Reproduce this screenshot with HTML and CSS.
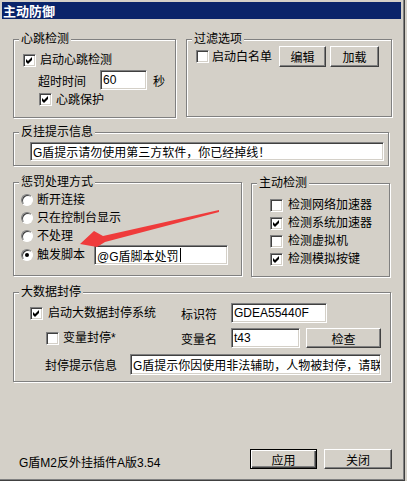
FILE: index.html
```html
<!DOCTYPE html>
<html lang="zh-CN">
<head>
    <meta charset="UTF-8">
    <title>主动防御</title>
    <link rel="stylesheet" href="styles.css">
</head>
<body>
    <div class="window">
        <!-- Title bar -->
        <div class="titlebar">主动防御</div>

        <div class="content">
            <!-- Row 1: heartbeat + filter -->
            <div class="row-top">
                <div class="group group-heart">
                    <span class="legend">心跳检测</span>
                    <div class="line heart-on">
                        <span class="check"><svg viewBox="0 0 13 13" width="13" height="13"><polygon points="3,5 5,7 9,3 9,6 5,10 3,8"/></svg></span>
                        <span class="text">启动心跳检测</span>
                    </div>
                    <div class="line heart-timeout">
                        <span class="timeout-label">超时时间</span>
                        <div class="edit edit-timeout">60</div>
                        <span class="unit">秒</span>
                    </div>
                    <div class="line heart-protect">
                        <span class="check"><svg viewBox="0 0 13 13" width="13" height="13"><polygon points="3,5 5,7 9,3 9,6 5,10 3,8"/></svg></span>
                        <span class="text">心跳保护</span>
                    </div>
                </div>

                <div class="group group-filter">
                    <span class="legend">过滤选项</span>
                    <div class="line filter-line">
                        <span class="check"></span>
                        <span class="text text-white">启动白名单</span>
                        <button class="btn btn-edit">编辑</button>
                        <button class="btn btn-load">加载</button>
                    </div>
                </div>
            </div>

            <!-- Row 2: message -->
            <div class="group group-msg">
                <span class="legend">反挂提示信息</span>
                <div class="edit edit-msg">G盾提示请勿使用第三方软件，你已经掉线！</div>
            </div>

            <!-- Row 3: punishment + detection -->
            <div class="row-mid">
                <div class="group group-punish">
                    <span class="legend">惩罚处理方式</span>
                    <div class="radios">
                        <div class="line radio-line"><span class="radio"></span><span class="text">断开连接</span></div>
                        <div class="line radio-line"><span class="radio"></span><span class="text">只在控制台显示</span></div>
                        <div class="line radio-line"><span class="radio"></span><span class="text">不处理</span></div>
                        <div class="line radio-line radio-last">
                            <span class="radio on"><span class="dot"></span></span>
                            <span class="text script-label">触发脚本</span>
                            <div class="edit edit-script">@G盾脚本处罚<span class="caret"></span></div>
                        </div>
                    </div>
                </div>

                <div class="group group-detect">
                    <span class="legend">主动检测</span>
                    <div class="detects">
                        <div class="line detect-line"><span class="check"></span><span class="text">检测网络加速器</span></div>
                        <div class="line detect-line"><span class="check"><svg viewBox="0 0 13 13" width="13" height="13"><polygon points="3,5 5,7 9,3 9,6 5,10 3,8"/></svg></span><span class="text">检测系统加速器</span></div>
                        <div class="line detect-line"><span class="check"></span><span class="text">检测虚拟机</span></div>
                        <div class="line detect-line"><span class="check"><svg viewBox="0 0 13 13" width="13" height="13"><polygon points="3,5 5,7 9,3 9,6 5,10 3,8"/></svg></span><span class="text">检测模拟按键</span></div>
                    </div>
                </div>
            </div>

            <!-- Row 4: big data ban -->
            <div class="group group-ban">
                <span class="legend">大数据封停</span>
                <div class="line ban-a">
                    <div class="cell cell-check">
                        <span class="check"><svg viewBox="0 0 13 13" width="13" height="13"><polygon points="3,5 5,7 9,3 9,6 5,10 3,8"/></svg></span>
                        <span class="text">启动大数据封停系统</span>
                    </div>
                    <span class="cell cell-label">标识符</span>
                    <div class="edit edit-id">GDEA55440F</div>
                </div>
                <div class="line ban-b">
                    <div class="cell cell-check cell-var">
                        <span class="check"></span>
                        <span class="text">变量封停*</span>
                    </div>
                    <span class="cell cell-label">变量名</span>
                    <div class="edit edit-var">t43</div>
                    <button class="btn btn-check">检查</button>
                </div>
                <div class="line ban-c">
                    <span class="cell cell-tip">封停提示信息</span>
                    <div class="edit edit-tip">G盾提示你因使用非法辅助，人物被封停，请联系管理员</div>
                </div>
            </div>

            <!-- Footer -->
            <div class="footer">
                <span class="version">G盾M2反外挂插件A版3.54</span>
                <button class="btn btn-apply">应用</button>
                <button class="btn btn-close">关闭</button>
            </div>
        </div>

        <!-- Red annotation arrow -->
        <svg class="arrow" width="405" height="481" viewBox="0 0 405 481">
            <polygon points="219,210 103,236 94,231 80,244 97,247 105,242 219,212"/>
        </svg>
    </div>
</body>
</html>
```

FILE: styles.css
```css
/* General styles */
body {
    margin: 0;
    background: #d4d0c8;
    font-family: "Liberation Sans", "Noto Sans CJK SC", sans-serif;
    font-size: 12px;
    color: #000;
}

.window {
    position: relative;
    width: 405px;
    height: 481px;
    box-sizing: border-box;
    background: #d4d0c8;
    border-right: 1px solid #404040;
    border-bottom: 1px solid #404040;
    box-shadow: inset -1px -1px 0 #808080;
    overflow: hidden;
}

.titlebar {
    margin: 2px 3px 0 2px;
    height: 17px;
    line-height: 17px;
    padding-left: 1px;
    background: #0a246a;
    color: #fff;
    font-family: "Noto Sans CJK SC", sans-serif;
    font-size: 13px;
    font-weight: bold;
}

.content {
    padding-left: 13px;
}

/* Group boxes */
.group {
    box-sizing: border-box;
    border: 1px solid #808080;
    box-shadow: inset 1px 1px 0 #fff, 1px 1px 0 #fff;
}

.legend {
    display: block;
    width: max-content;
    height: 14px;
    line-height: 14px;
    margin: -8px 0 0 5px;
    padding: 0 2px;
    background: #d4d0c8;
}

.line {
    display: flex;
    align-items: center;
}

.text {
    white-space: nowrap;
    line-height: 14px;
}

/* Controls */
.check {
    flex: none;
    width: 13px;
    height: 13px;
    box-sizing: border-box;
    background: #fff;
    border: 1px solid;
    border-color: #808080 #fff #fff #808080;
    box-shadow: inset 1px 1px 0 #404040, inset -1px -1px 0 #d4d0c8;
    position: relative;
}

.check svg {
    display: block;
    margin: -1px;
    fill: #000;
}

.check + .text {
    margin-left: 4px;
}

.radio {
    flex: none;
    width: 12px;
    height: 12px;
    box-sizing: border-box;
    border-radius: 50%;
    background: #fff;
    border: 1px solid;
    border-color: #808080 #fff #fff #808080;
    box-shadow: inset 1px 1px 0 #404040;
    display: flex;
    align-items: center;
    justify-content: center;
}

.radio .dot {
    width: 4px;
    height: 4px;
    border-radius: 50%;
    background: #000;
}

.radio + .text {
    margin-left: 4px;
}

.edit {
    flex: none;
    box-sizing: border-box;
    background: #fff;
    border: 1px solid;
    border-color: #808080 #fff #fff #808080;
    box-shadow: inset 1px 1px 0 #404040, inset -1px -1px 0 #d4d0c8;
    padding-left: 2px;
    white-space: nowrap;
    overflow: hidden;
    display: flex;
    align-items: center;
}

.caret {
    display: inline-block;
    width: 1px;
    height: 14px;
    margin-left: 1px;
    background: #000;
}

.btn {
    flex: none;
    box-sizing: border-box;
    padding: 0;
    font-family: "Noto Sans CJK SC", sans-serif;
    font-size: 12px;
    color: #000;
    background: #d4d0c8;
    border: 1px solid;
    border-color: #fff #404040 #404040 #fff;
    box-shadow: inset -1px -1px 0 #808080;
    border-radius: 0;
}

/* Row 1 */
.row-top {
    display: flex;
    align-items: flex-start;
    gap: 10px;
    margin-top: 20px;
}

.group-heart {
    width: 163px;
    height: 79px;
}

.heart-on {
    margin-top: 4px;
    height: 20px;
    padding-left: 9px;
}

.heart-timeout {
    height: 20px;
    padding-left: 24px;
}

.timeout-label {
    width: 62px;
}

.edit-timeout {
    width: 47px;
    height: 20px;
}

.unit {
    margin-left: 6px;
}

.heart-protect {
    height: 19px;
    padding-left: 25px;
}

.group-filter {
    width: 206px;
    height: 78px;
}

.filter-line {
    height: 21px;
    padding-left: 9px;
}

.filter-line .text-white {
    margin-left: 3px;
}

.btn-edit {
    margin-left: 7px;
    width: 47px;
    height: 21px;
}

.btn-load {
    margin-left: 4px;
    width: 49px;
    height: 21px;
}

/* Row 2 */
.group-msg {
    width: 376px;
    height: 34px;
    margin-top: 14px;
}

.edit-msg {
    width: 354px;
    height: 19px;
    margin: 3px 0 0 16px;
}

/* Row 3 */
.row-mid {
    display: flex;
    align-items: flex-start;
    gap: 9px;
    margin-top: 16px;
}

.group-punish {
    width: 229px;
    height: 94px;
}

.radios {
    margin-top: 2px;
    padding-left: 7px;
}

.radio-line {
    height: 18px;
}

.radio-last {
    height: 20px;
}

.script-label {
    width: 57px;
}

.edit-script {
    width: 134px;
    height: 20px;
}

.group-detect {
    width: 139px;
    height: 94px;
    margin-top: 1px;
}

.detects {
    margin-top: 6px;
    padding-left: 18px;
}

.detect-line {
    height: 18px;
}

.detect-line .text {
    margin-left: 5px;
}

/* Row 4 */
.group-ban {
    width: 378px;
    height: 90px;
    margin-top: 15px;
}

.group-ban .line {
    padding-left: 16px;
}

.cell {
    flex: none;
    display: flex;
    align-items: center;
}

.cell-check {
    width: 151px;
}

.cell-check .text {
    margin-left: 5px;
}

.cell-var {
    box-sizing: border-box;
    padding-left: 16px;
}

.cell-var .text {
    margin-left: 4px;
}

.cell-label {
    width: 50px;
}

.ban-a {
    margin-top: 4px;
    height: 20px;
}

.edit-id {
    width: 96px;
    height: 20px;
}

.ban-b {
    margin-top: 5px;
    height: 20px;
}

.edit-var {
    width: 69px;
    height: 20px;
}

.btn-check {
    margin-left: 6px;
    width: 75px;
    height: 20px;
}

.ban-c {
    margin-top: 6px;
    height: 21px;
}

.cell-tip {
    width: 100px;
    box-sizing: border-box;
    padding-left: 15px;
}

.edit-tip {
    width: 251px;
    height: 21px;
}

/* Footer */
.footer {
    display: flex;
    align-items: flex-start;
    margin-top: 67px;
    margin-right: 12px;
}

.version {
    margin: 7px 0 0 6px;
    line-height: 14px;
}

.btn-apply {
    margin-left: auto;
    width: 67px;
    height: 20px;
    border: 1px solid #000;
    box-shadow: inset 1px 1px 0 #fff, inset -1px -1px 0 #404040, inset -2px -2px 0 #808080;
}

.btn-close {
    margin-left: 7px;
    width: 68px;
    height: 20px;
}

/* Annotation */
.arrow {
    position: absolute;
    left: 0;
    top: 0;
    pointer-events: none;
}

.arrow polygon {
    fill: #ef3b3b;
}
```
